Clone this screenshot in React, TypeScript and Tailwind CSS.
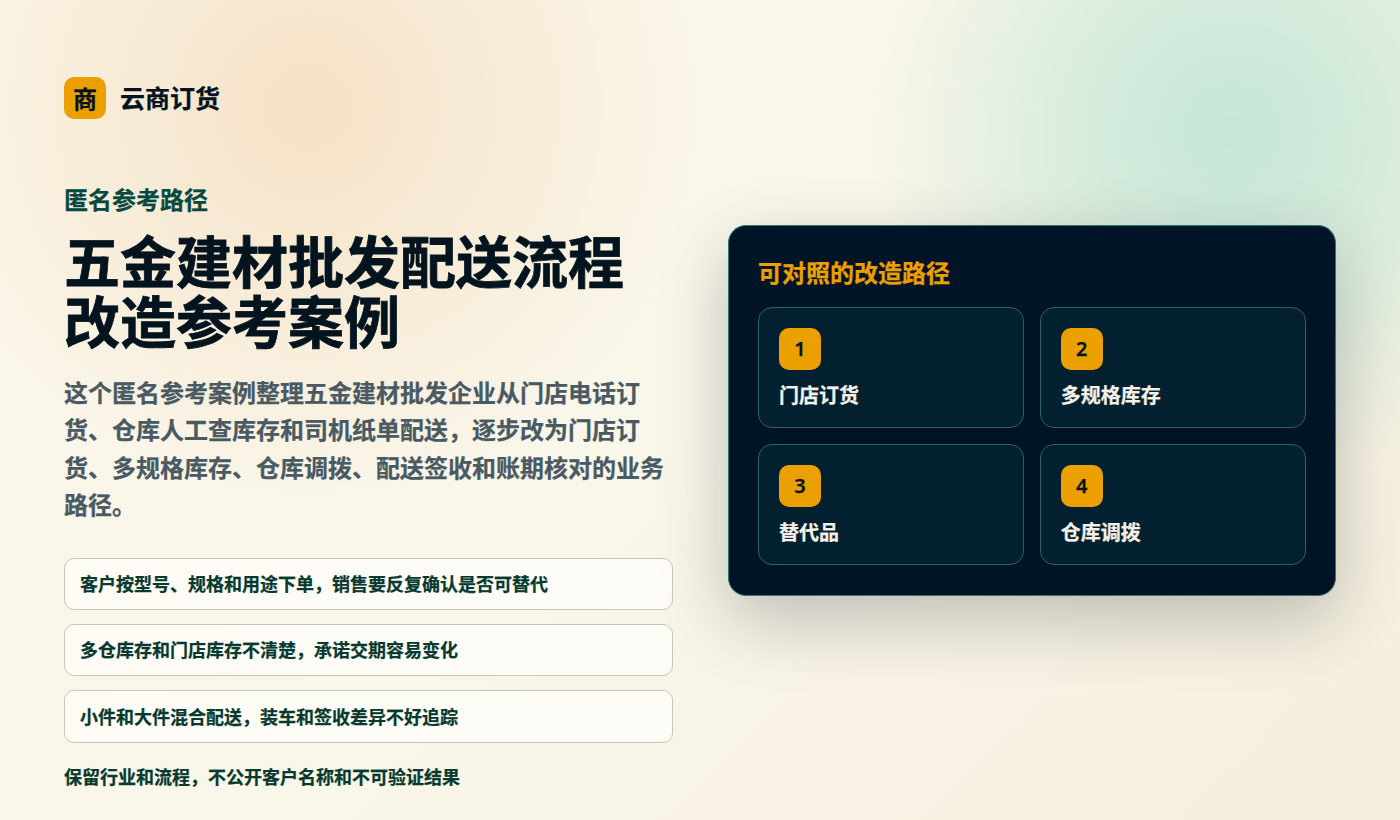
const font = 'font-["Noto_Sans","Noto_Sans_CJK_SC",sans-serif]';

const pains = [
  '客户按型号、规格和用途下单，销售要反复确认是否可替代',
  '多仓库存和门店库存不清楚，承诺交期容易变化',
  '小件和大件混合配送，装车和签收差异不好追踪',
];

const steps = ['门店订货', '多规格库存', '替代品', '仓库调拨'];

export default function App() {
  return (
    <main
      className={`${font} [-webkit-text-stroke:0.25px] w-full h-[820px] overflow-hidden px-16 grid grid-cols-2 gap-[55px] items-start bg-[radial-gradient(circle_at_88%_16%,#c5e7d7_0,rgba(197,231,215,0.72)_130px,rgba(197,231,215,0)_360px),radial-gradient(circle_at_22%_13%,#f5e2c6_0,rgba(245,226,198,0)_400px),linear-gradient(135deg,#fbf6e9_0%,#f9f6ea_50%,#f5eedc_100%)]`}
    >
      <section className="flex flex-col pt-[77px]">
        <div className="flex items-center gap-[14px] mb-[63px]">
          <div className="w-[42px] h-[42px] pt-[1px] rounded-[10px] bg-[#eba000] flex items-center justify-center text-[24px] font-bold text-[#04141f]">
            商
          </div>
          <span className="pt-[2px] text-[25px] font-bold text-[#04141f]">云商订货</span>
        </div>
        <p className="text-[24px] leading-[36px] font-bold text-[#07493f] mb-[13px]">匿名参考路径</p>
        <h1 className="[-webkit-text-stroke:0.8px] text-[56px] leading-[60px] font-bold text-[#04141f] mb-[23px]">
          五金建材批发配送流程
          <br />
          改造参考案例
        </h1>
        <p className="text-[24px] leading-[37.4px] font-bold text-[#4a5a63] mb-[34px]">
          这个匿名参考案例整理五金建材批发企业从门店电话订货、仓库人工查库存和司机纸单配送，逐步改为门店订货、多规格库存、仓库调拨、配送签收和账期核对的业务路径。
        </p>
        <ul className="flex flex-col gap-[14px] mb-[21px]">
          {pains.map((text) => (
            <li
              key={text}
              className="h-[52.4px] pt-[1px] px-[15px] flex items-center rounded-[10px] border border-[#cbc5b5] bg-[#fffdf8]/85 text-[18px] font-bold text-[#07392f]"
            >
              {text}
            </li>
          ))}
        </ul>
        <p className="text-[18px] leading-[27px] font-bold text-[#07392f]">保留行业和流程，不公开客户名称和不可验证结果</p>
      </section>

      <section className="self-center rounded-[18px] border border-[#2f7770] bg-[#001428] px-[29.5px] pt-[29px] pb-[30px] shadow-[0_24px_70px_rgba(4,20,31,0.24)]">
        <h2 className="text-[24px] leading-[36px] font-bold text-[#eba000] mb-[16px]">可对照的改造路径</h2>
        <div className="grid grid-cols-2 gap-4">
          {steps.map((label, i) => (
            <div key={label} className="h-[121px] rounded-[14px] border border-[#2a6460] bg-[#02202f] p-5 flex flex-col">
              <div className="w-[42px] h-[42px] shrink-0 rounded-[10px] bg-[#eba000] flex items-center justify-center text-[20px] font-semibold text-[#04141f]">
                {i + 1}
              </div>
              <span className="mt-[11px] text-[20px] leading-[30px] font-bold text-[#f4f1e8]">{label}</span>
            </div>
          ))}
        </div>
      </section>
    </main>
  );
}
